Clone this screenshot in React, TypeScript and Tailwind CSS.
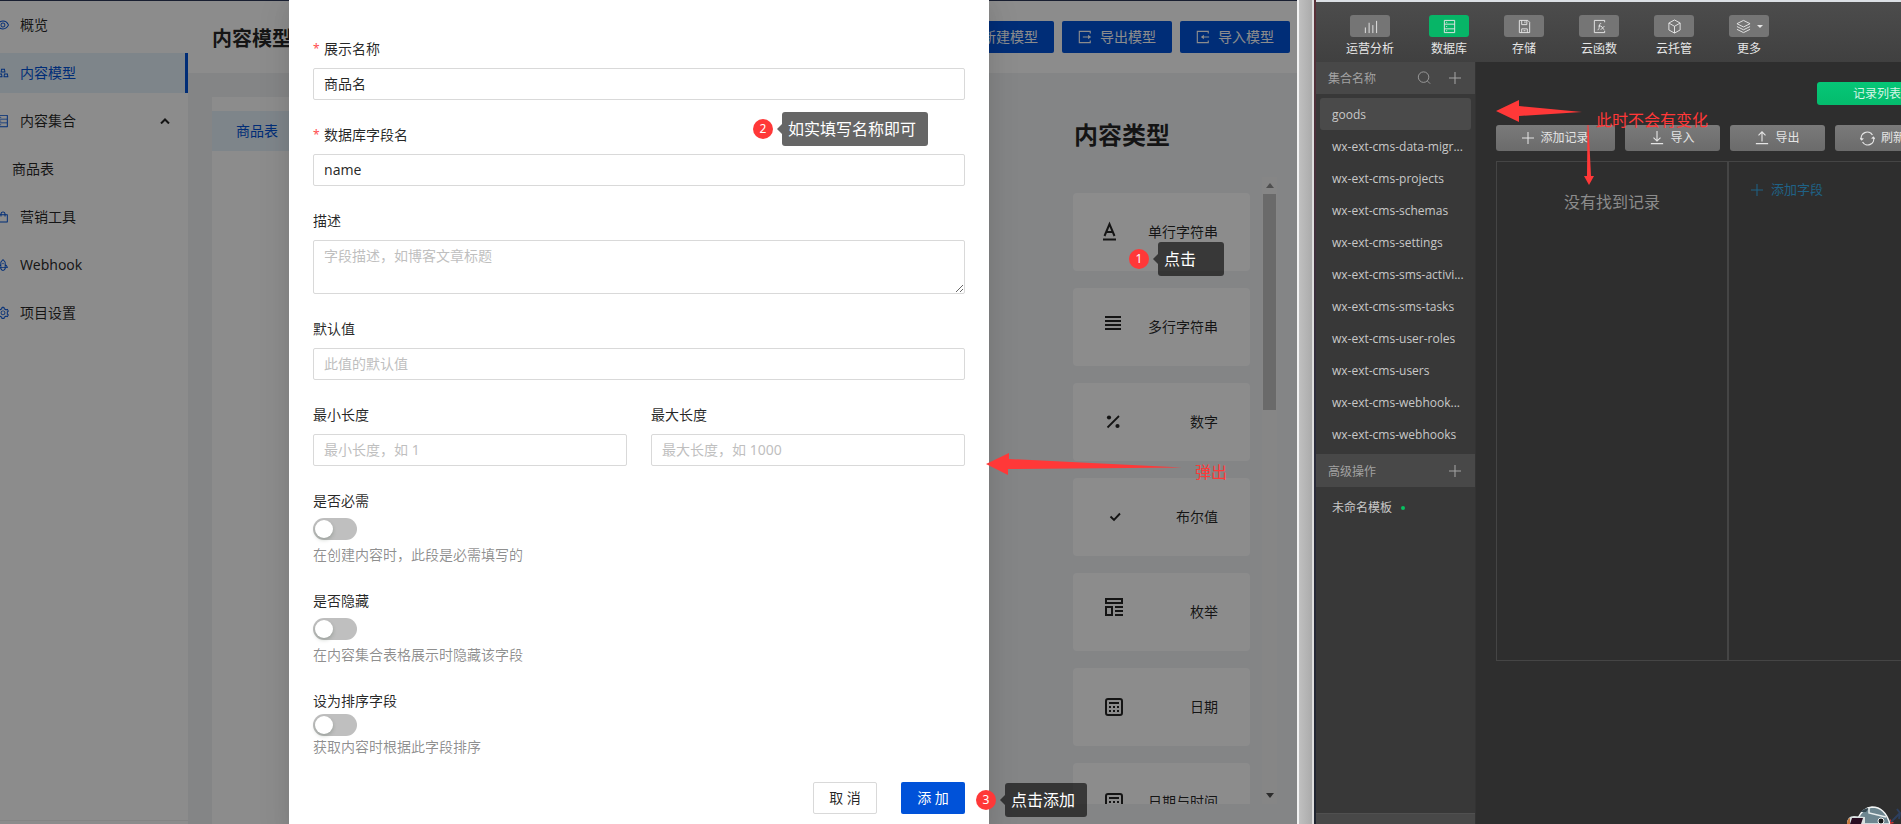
import { useState, type ReactNode } from "react";
import {
  AiOutlineDatabase,
  AiOutlineEye,
  AiOutlineGold,
  AiOutlinePlus,
  AiOutlineRocket,
  AiOutlineSetting,
  AiOutlineShopping,
} from "react-icons/ai";

const MENU = [
  { label: "概览", icon: <AiOutlineEye /> },
  { label: "内容模型", icon: <AiOutlineGold />, active: true },
  { label: "内容集合", icon: <AiOutlineDatabase />, open: true },
  { label: "商品表", child: true },
  { label: "营销工具", icon: <AiOutlineShopping /> },
  { label: "Webhook", icon: <AiOutlineRocket /> },
  { label: "项目设置", icon: <AiOutlineSetting /> },
];

const CALENDAR_ICON = (
  <>
    <rect x="1" y="1" width="16" height="16" rx="2" fill="none" stroke="currentColor" strokeWidth="2" />
    <path d="M4 4h10v2H4zM4 8h2v2H4zM8 8h2v2H8zM12 8h2v2h-2zM4 12h2v2H4zM8 12h2v2H8zM12 12h2v2h-2z" />
  </>
);

const FIELD_TYPES = [
  {
    label: "单行字符串",
    icon: (
      <path
        d="M-.5 13 4.5 1 9.500 13M1.300 9h6.400M-2 16.500h13"
        fill="none"
        stroke="currentColor"
        strokeWidth="2"
      />
    ),
  },
  { label: "多行字符串", icon: <path d="M0-2h16v2H0zM0 2h16v2H0zM0 6h16v2H0zM0 10h16v2H0z" /> },
  {
    label: "数字",
    icon: (
      <>
        <circle cx="4" cy="4.500" r="2.100" />
        <circle cx="12.500" cy="13" r="2.100" />
        <path d="M2.500 14.500 14 3" stroke="currentColor" strokeWidth="1.800" />
      </>
    ),
  },
  {
    label: "布尔值",
    icon: <path d="m5.500 8.500 3.500 3.500 6-6.500" fill="none" stroke="currentColor" strokeWidth="1.900" />,
  },
  {
    label: "枚举",
    icon: (
      <path
        d="M1-4h16v4H1zM1 4h6v8H1zM10 4h8M10 8h8M10 12h8"
        fill="none"
        stroke="currentColor"
        strokeWidth="2"
      />
    ),
  },
  { label: "日期", icon: CALENDAR_ICON },
  { label: "日期与时间", icon: CALENDAR_ICON },
];

const TOOLS = [
  {
    label: "运营分析",
    icon: <path d="M2.500 15V9M6.500 15V4M10.500 15V6.500M14.500 15V2" />,
  },
  {
    label: "数据库",
    active: true,
    icon: (
      <path d="M2.500 1.500h11v13h-11zM2.500 5.500h11M2.500 10.500h11M4.500 3.500h1M4.500 8h1M4.500 12.500h1" />
    ),
  },
  {
    label: "存储",
    icon: <path d="M2.500 1.500h9l2 2v11h-11zM5 1.500v4.500h5.500V1.500M8.500 2.500v2M5 14.500v-4h6v4M7 12.500h2" />,
  },
  {
    label: "云函数",
    icon: (
      <>
        <path d="M13.500 3.500v-2h-11v13h11v-2" />
        <path d="M6 11.500c1.500 0 1.300-1 1.600-2.500l.6-3c.2-1 .7-1.500 1.600-1.200M6.800 7.500h2.700M9.800 7.500l3 4M13.300 7.500l-4 4" />
      </>
    ),
  },
  {
    label: "云托管",
    icon: <path d="M8 1l6 3.300v7.400L8 15l-6-3.300V4.300zM2 4.300l6 3.500 6-3.500M8 7.800V15" />,
  },
  {
    label: "更多",
    caret: true,
    icon: <path d="M8 1.500l7 3.500-7 3.500L1 5zM1 8l7 3.500L15 8M1 11l7 3.500 7-3.500" />,
  },
];

const COLLECTIONS = [
  "goods",
  "wx-ext-cms-data-migr...",
  "wx-ext-cms-projects",
  "wx-ext-cms-schemas",
  "wx-ext-cms-settings",
  "wx-ext-cms-sms-activi...",
  "wx-ext-cms-sms-tasks",
  "wx-ext-cms-user-roles",
  "wx-ext-cms-users",
  "wx-ext-cms-webhook...",
  "wx-ext-cms-webhooks",
];

const inputClass =
  "h-8 w-full rounded-[2px] border border-[#d9d9d9] bg-white px-[10px] pb-[2px] text-sm text-black/85 outline-none placeholder:text-[#bfbfbf] focus:border-[#0052d9]";

function Field({
  id,
  label,
  required,
  children,
}: {
  id: string;
  label: string;
  required?: boolean;
  children: ReactNode;
}) {
  return (
    <div className="mb-6 flex-1">
      <label htmlFor={id} className="flex pb-2 leading-[22px]">
        {required && <span className="mr-1 w-[7px] text-xs leading-[22px] text-[#ff4d4f]">*</span>}
        {label}
      </label>
      {children}
    </div>
  );
}

function Toggle({ id }: { id: string }) {
  const [on, setOn] = useState(false);
  return (
    <input
      id={id}
      type="checkbox"
      role="switch"
      checked={on}
      onChange={(e) => setOn(e.target.checked)}
      className="block h-[22px] w-11 cursor-pointer appearance-none rounded-full bg-[#bfbfbf] p-[2px] before:block before:size-[18px] before:rounded-full before:bg-white before:shadow-[0_2px_4px_rgba(0,35,11,0.2)] before:content-[''] checked:bg-[#0052d9] checked:before:ml-[22px]"
    />
  );
}

// Numbered red marker with a dark speech box
function Callout({ n, text, className }: { n: number; text: string; className: string }) {
  return (
    <div className={`absolute z-20 flex items-center whitespace-nowrap ${className}`}>
      <span className="flex size-5 items-center justify-center rounded-full bg-[#ff3838] text-xs text-white">
        {n}
      </span>
      <span className="ml-1 border-y-[5px] border-r-[5px] border-y-transparent border-r-black/60" />
      <span className="h-[34px] min-w-[66px] rounded-[3px] bg-black/60 pr-3 pl-[6px] text-base leading-[34px] text-white">
        {text}
      </span>
    </div>
  );
}

function Sidebar() {
  return (
    <nav className="flex w-52 shrink-0 flex-col bg-white pt-1">
      <div className="flex-1 space-y-2">
        {MENU.map((m) => (
          <a
            key={m.label}
            href="#"
            className={`flex h-10 items-center ${m.child ? "pl-8" : "pl-4"} ${
              m.active ? "border-r-[3px] border-[#0052d9] bg-[#e6f2fc] text-[#0052d9]" : ""
            }`}
          >
            {m.icon && <span className="mr-[10px] text-sm text-[#0052d9]">{m.icon}</span>}
            {m.label}
            {m.open && (
              <svg viewBox="0 0 10 6" className="mr-[18px] ml-auto h-[6px] w-[10px]">
                <path d="M1 5.500 5 1.500 9 5.500" fill="none" stroke="currentColor" strokeWidth="2" />
              </svg>
            )}
          </a>
        ))}
      </div>
      <div className="h-1 border-t border-[#f0f0f0]" />
    </nav>
  );
}

function TypeList() {
  return (
    <div className="mr-5 w-[204px]">
      <h3 className="mt-[22px] mb-[26px] pl-px text-2xl leading-8 font-bold">内容类型</h3>
      <div className="flex h-[calc(100vh-197px)] overflow-hidden">
        <div className="w-[177px] space-y-[17px] pt-4">
          {FIELD_TYPES.map((t) => (
            <div
              key={t.label}
              className="flex h-[78px] items-center justify-between rounded bg-white px-8"
            >
              <svg viewBox="0 0 18 18" fill="currentColor" className="size-[18px] overflow-visible">
                {t.icon}
              </svg>
              {t.label}
            </div>
          ))}
        </div>
        {/* Scroll bar */}
        <div className="ml-auto flex w-[15px] flex-col items-center bg-[#f4f4f4]">
          <svg viewBox="0 0 8 5" className="my-[6px] h-[5px] w-2 text-[#909090]">
            <path d="M0 5 4 0l4 5z" fill="currentColor" />
          </svg>
          <div className="h-[216px] w-[13px] bg-[#c1c1c1]" />
          <svg viewBox="0 0 8 5" className="mt-auto mb-[6px] h-[5px] w-2 text-[#505050]">
            <path d="M0 0 4 5l4-5z" fill="currentColor" />
          </svg>
        </div>
      </div>
    </div>
  );
}

function HeaderButton({ icon, children }: { icon: ReactNode; children: ReactNode }) {
  return (
    <button className="flex h-8 items-center gap-2 rounded-[2px] bg-[#0052d9] px-4 text-white">
      {icon}
      {children}
    </button>
  );
}

function ToolIcon({ children, className }: { children: ReactNode; className: string }) {
  return (
    <svg viewBox="0 0 16 16" fill="none" stroke="currentColor" className={className}>
      {children}
    </svg>
  );
}

function FieldDialog() {
  return (
    <div
      role="dialog"
      aria-label="添加字段"
      className="relative w-[700px] bg-white px-6 pt-[38px] shadow-[0_6px_16px_rgba(0,0,0,0.08),0_9px_28px_8px_rgba(0,0,0,0.05)]"
    >
      <form onSubmit={(e) => e.preventDefault()}>
        <Field id="displayName" label="展示名称" required>
          <input id="displayName" defaultValue="商品名" className={inputClass} />
        </Field>
        <Field id="name" label="数据库字段名" required>
          <input id="name" defaultValue="name" className={inputClass} />
        </Field>
        <Field id="description" label="描述">
          <textarea
            id="description"
            placeholder="字段描述，如博客文章标题"
            className="block h-[54px] w-full rounded-[2px] border border-[#d9d9d9] px-[10px] py-1 leading-[22px] outline-none placeholder:text-[#bfbfbf]"
          />
        </Field>
        <Field id="defaultValue" label="默认值">
          <input id="defaultValue" placeholder="此值的默认值" className={inputClass} />
        </Field>
        <div className="flex gap-6">
          <Field id="min" label="最小长度">
            <input id="min" placeholder="最小长度，如 1" className={inputClass} />
          </Field>
          <Field id="max" label="最大长度">
            <input id="max" placeholder="最大长度，如 1000" className={inputClass} />
          </Field>
        </div>
        <div className="mb-6 leading-[22px]">
          <label htmlFor="isRequired" className="mb-[6px] block">是否必需</label>
          <Toggle id="isRequired" />
          <p className="mt-1 text-black/45">在创建内容时，此段是必需填写的</p>
        </div>
        <div className="mb-6 leading-[22px]">
          <label htmlFor="isHidden" className="mb-[6px] block">是否隐藏</label>
          <Toggle id="isHidden" />
          <p className="mt-1 text-black/45">在内容集合表格展示时隐藏该字段</p>
        </div>
        <div className="mb-6 leading-[22px]">
          <label htmlFor="isOrderField" className="mb-[2px] block">设为排序字段</label>
          <Toggle id="isOrderField" />
          <p className="text-black/45">获取内容时根据此字段排序</p>
        </div>
        <div className="flex justify-end gap-6">
          <button type="button" className="h-8 w-16 rounded-[2px] border border-[#d9d9d9]">
            取 消
          </button>
          <button type="submit" className="h-8 w-16 rounded-[2px] bg-[#0052d9] text-white">
            添 加
          </button>
        </div>
      </form>

      <Callout n={2} text="如实填写名称即可" className="top-28 left-[464px]" />
      <Callout n={3} text="点击添加" className="top-[783px] left-[687px]" />
      <div className="absolute top-[453px] left-[697px] z-20 flex w-[260px] text-[#ff3838]">
        <svg viewBox="0 0 196 22" className="mr-[13px] h-[22px] w-[196px] shrink-0">
          <path d="M0 11 23 0v6l173 8.500L22 16v6z" fill="currentColor" />
        </svg>
        <span className="pt-2 text-base leading-[22px]">弹出</span>
      </div>
    </div>
  );
}

function CmsPane() {
  return (
    <div className="min-w-0 flex-1 overflow-hidden">
      <div className="relative -ml-5 flex h-full flex-col bg-[#f0f2f5] text-sm text-black/85">
        <div className="h-px shrink-0 bg-[#2f3a5a]" />
        <div className="flex min-h-0 flex-1">
          <Sidebar />
          <main className="flex min-w-0 flex-1 flex-col">
            <header className="flex h-[72px] shrink-0 items-start justify-between bg-white pt-5 pr-[7px] pl-6">
              <h1 className="text-xl leading-9 font-bold">内容模型</h1>
              <div className="flex gap-2">
                <HeaderButton icon={<AiOutlinePlus />}>新建模型</HeaderButton>
                <HeaderButton
                  icon={
                    <ToolIcon className="size-[14px]">
                      <path d="M14 4V1.500H1.500v13H14V12M5.500 8h8" strokeWidth="1.300" />
                      <path d="M11.500 5.500 15 8l-3.500 2.500z" fill="currentColor" stroke="none" />
                    </ToolIcon>
                  }
                >
                  导出模型
                </HeaderButton>
                <HeaderButton
                  icon={
                    <ToolIcon className="size-[14px]">
                      <path d="M14 4V1.500H1.500v13H14V12M7 8h8" strokeWidth="1.300" />
                      <path d="M9 5.500 5.500 8 9 10.500z" fill="currentColor" stroke="none" />
                    </ToolIcon>
                  }
                >
                  导入模型
                </HeaderButton>
              </div>
            </header>
            <div className="flex min-h-0 flex-1 justify-between pt-6 pl-6">
              <div className="w-[220px] bg-white pt-[14px]">
                <a href="#" className="flex h-10 items-center bg-[#e6f2fc] pl-6 text-[#0052d9]">
                  商品表
                </a>
              </div>
              <TypeList />
            </div>
          </main>
        </div>

        <div className="absolute inset-0 z-10 flex justify-center bg-black/45 pl-px">
          <FieldDialog />
        </div>
        <Callout n={1} text="点击" className="top-[242px] right-[73px]" />
      </div>
    </div>
  );
}

const actionClass =
  "flex h-[26px] items-center justify-center gap-[6px] rounded-[3px] bg-linear-to-b from-[#7a7a7a] to-[#6b6b6b] text-[#e4e4e4]";

function DevToolsPane() {
  return (
    <div className="flex w-[585px] shrink-0 flex-col overflow-hidden bg-[#2e2e2e] text-xs">
      <div className="h-[2px] shrink-0 bg-[#dce0e5]" />
      <div className="flex h-[60px] shrink-0 gap-[35px] bg-linear-to-b from-[#4c4c4c] to-[#404040] pt-[13px] pl-[30px]">
        {TOOLS.map((t) => (
          <button key={t.label} className="flex shrink-0 flex-col items-center text-[#e6e6e6]">
            <span
              className={`flex h-[22px] w-10 items-center justify-center gap-[6px] rounded-[3px] ${
                t.active ? "bg-[#07b567]" : "bg-[#757575]"
              }`}
            >
              <ToolIcon className="size-[15px]">{t.icon}</ToolIcon>
              {t.caret && (
                <span className="border-x-[3px] border-t-[3px] border-x-transparent border-t-current" />
              )}
            </span>
            <span className="mt-1 leading-4">{t.label}</span>
          </button>
        ))}
      </div>

      <div className="flex min-h-0 flex-1">
        <aside className="flex w-40 shrink-0 flex-col border-r border-[#333] bg-[#383838] text-[#c8c8c8]">
          <div className="flex h-8 items-center bg-[#484848] pr-[14px] pl-3 text-[#a2a2a2]">
            <span className="pt-[2px]">集合名称</span>
            <button aria-label="搜索" className="ml-auto">
              <ToolIcon className="size-[14px]">
                <circle cx="7.500" cy="7" r="6" />
                <path d="m12 11.500 3 3" />
              </ToolIcon>
            </button>
            <button aria-label="新建集合" className="ml-[18px]">
              <ToolIcon className="size-3">
                <path d="M8 0v16M0 8h16" strokeWidth="1.400" />
              </ToolIcon>
            </button>
          </div>
          <ul className="mt-1 px-1 font-['Open_Sans','Noto_Sans_CJK_SC',sans-serif]">
            {COLLECTIONS.map((c, i) => (
              <li key={c}>
                <a
                  href="#"
                  className={`flex h-8 items-center rounded-[3px] pt-[2px] pl-3 ${i === 0 ? "bg-[#4a4a4a]" : ""}`}
                >
                  {c}
                </a>
              </li>
            ))}
          </ul>
          <div className="mt-1 flex h-[33px] items-center justify-between bg-[#484848] pr-[14px] pl-3 text-[#a2a2a2]">
            <span className="pt-[2px]">高级操作</span>
            <button aria-label="新建模板">
              <ToolIcon className="size-3">
                <path d="M8 0v16M0 8h16" strokeWidth="1.400" />
              </ToolIcon>
            </button>
          </div>
          <div className="mt-1 flex h-8 items-center gap-[9px] pt-[2px] pl-4">
            未命名模板
            <span className="size-1 rounded-full bg-[#07c160]" />
          </div>
          <div className="mt-auto h-[11px] border-t border-[#505050] bg-[#484848]" />
        </aside>

        <section className="relative min-w-0 flex-1 overflow-hidden pt-5 pl-5">
          <button className="ml-[321px] flex h-[23px] w-[132px] items-center rounded-[3px] bg-linear-to-b from-[#06c777] to-[#04bb6d] pl-9 whitespace-nowrap text-[#d5f5e6]">
            记录列表
          </button>
          <div className="mt-5 flex gap-[10px] *:shrink-0">
            <button className={`${actionClass} w-[119px]`}>
              <ToolIcon className="size-3">
                <path d="M8 0v16M0 8h16" strokeWidth="1.400" />
              </ToolIcon>
              添加记录
            </button>
            <button className={`${actionClass} w-[95px]`}>
              <ToolIcon className="size-[14px]">
                <path d="M8 0v11M4 7.500 8 11.500l4-4M1 14.500h14" strokeWidth="1.300" />
              </ToolIcon>
              导入
            </button>
            <button className={`${actionClass} w-[95px]`}>
              <ToolIcon className="size-[14px]">
                <path d="M8 12V1.500M4 5l4-4 4 4M1 14.500h14" strokeWidth="1.300" />
              </ToolIcon>
              导出
            </button>
            <button className={`${actionClass} w-[95px]`}>
              <ToolIcon className="size-[15px]">
                <path d="M1.500 9.500A6.500 6.500 0 0 1 13.300 4.300M14.500 6.500A6.500 6.500 0 0 1 2.700 11.700" strokeWidth="1.300" />
                <path d="m-.3 7.500 2 3 2.500-2.500zM16.300 8.500l-2-3-2.500 2.500z" fill="currentColor" stroke="none" />
              </ToolIcon>
              刷新
            </button>
          </div>
          <div className="mt-[10px] flex h-[500px] w-[700px] border border-[#454545]">
            <div className="w-[232px] border-r-2 border-[#454545] pt-7 text-center text-base leading-6 text-[#8c8c8c]">
              没有找到记录
            </div>
            <button className="mt-4 flex h-6 items-center gap-2 self-start pl-[22px] text-[13px] text-[#1f6286]">
              <ToolIcon className="size-3">
                <path d="M8 0v16M0 8h16" strokeWidth="1.400" />
              </ToolIcon>
              添加字段
            </button>
          </div>

          {/* Red hand-drawn notes */}
          <div className="absolute top-[38px] left-5 flex text-[#ff3838]">
            <svg viewBox="0 0 86 22" className="h-[22px] w-[86px]">
              <path d="M0 11 23 0v6l63 6-63 4v6z" fill="currentColor" />
            </svg>
            <span className="ml-[14px] pt-2 text-base leading-6 whitespace-nowrap">此时不会有变化</span>
          </div>
          <svg viewBox="0 0 10 60" className="absolute top-[63px] left-[108px] h-[60px] w-[10px]">
            <path d="M3.500 0h1L7 51h3l-5 9-5-9h3z" fill="#ff3838" />
          </svg>

          {/* Mascot peeking from the bottom edge */}
          <svg viewBox="0 0 54 18" className="absolute right-0 bottom-0 h-[18px] w-[54px]">
            <path d="M11 12Q16 2 25 1q13 0 18 17H9z" fill="#6d8690" stroke="#f2f5f5" strokeWidth="1.400" />
            <path d="M13 6q5-4 9-4l-3 4z" fill="#34464f" />
            <path d="M22 1v6l17 4" fill="none" stroke="#e8eeee" strokeWidth="1.500" />
            <path d="M0 18q0-8 7-8l11 1v7z" fill="#d9e0e0" />
            <path d="M0 18q0-5 3-6v6z" fill="#c8793b" />
            <path d="M5 12h11l-2 6H3z" fill="#2a0d22" />
            <circle cx="34" cy="15" r="3" fill="#15191b" stroke="#f0f0f0" />
            <path d="m43 13 4 4-4 1z" fill="#e0322f" />
            <path d="m44 16 9-9M50 3l3 4-1 6" fill="none" stroke="#2d3f5e" strokeWidth="2" />
          </svg>
        </section>
      </div>
    </div>
  );
}

export default function App() {
  return (
    <div className="flex h-screen overflow-hidden font-['Noto_Sans','Noto_Sans_CJK_SC',sans-serif]">
      <CmsPane />
      {/* Window edge between the two applications */}
      <div className="flex w-[19px] shrink-0">
        <div className="w-[2px] bg-[#f2f2f2]" />
        <div className="flex-1 bg-linear-to-r from-[#c0c0c0] to-[#ababab]" />
        <div className="w-[2px] bg-[#dedede]" />
        <div className="w-[2px] bg-linear-to-b from-[#5a3038] via-[#2b2c3c] to-[#1f2430]" />
      </div>
      <DevToolsPane />
    </div>
  );
}
